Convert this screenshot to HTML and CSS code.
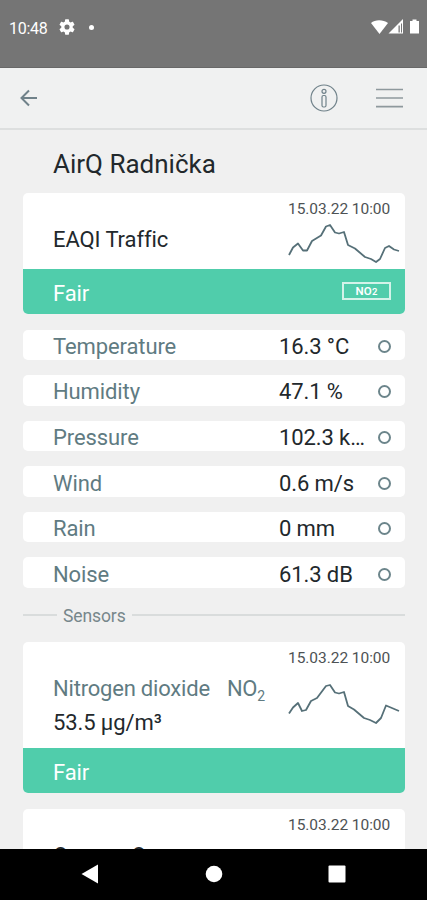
FILE: index.html
```
<!DOCTYPE html>
<html lang="en">
<head>
  <meta charset="UTF-8" />
  <meta name="viewport" content="width=device-width, initial-scale=1.0"/>
  <title>AirQ Radnička</title>
  <link rel="stylesheet" href="styles.css">
</head>
<body>
  <div class="screen">
    <div class="status-bar">
      <span class="clock">10:48</span>
      <svg class="gear" width="16" height="16" viewBox="2 2 20 20"><path fill="#fff" d="M19.14 12.94c.04-.3.06-.61.06-.94s-.02-.64-.07-.94l2.03-1.58a.5.5 0 0 0 .12-.61l-1.92-3.32a.49.49 0 0 0-.59-.22l-2.39.96a7 7 0 0 0-1.62-.94l-.36-2.54a.48.48 0 0 0-.48-.41h-3.84a.47.47 0 0 0-.47.41l-.36 2.54c-.59.24-1.13.57-1.62.94l-2.39-.96a.48.48 0 0 0-.59.22L2.74 8.87a.47.47 0 0 0 .12.61l2.03 1.58a6 6 0 0 0 0 1.88l-2.03 1.58a.5.5 0 0 0-.12.61l1.92 3.32c.12.22.37.29.59.22l2.39-.96c.5.38 1.03.7 1.62.94l.36 2.54c.05.24.24.41.48.41h3.84c.24 0 .44-.17.47-.41l.36-2.54a7 7 0 0 0 1.62-.94l2.39.96c.22.08.47 0 .59-.22l1.92-3.32a.47.47 0 0 0-.12-.61zM12 15.200a3.200 3.200 0 1 1 0-6.400 3.200 3.200 0 0 1 0 6.400z"/></svg>
      <span class="dot"></span>
      <svg class="signals" width="50" height="16" viewBox="0 0 50 16">
        <path fill="#fff" d="M0 4C4 .2 12 .2 17 4L8.500 15z"/>
        <path fill="#fff" d="M17.500 14.500 32 0v14.500z"/>
        <path fill="#757575" d="M27.500 6.500h1.300v7h-1.300zM30 4.500h1v9h-1z"/>
        <path fill="#fff" d="M39 2h2.500V.5h4V2H48v12.500h-9z"/>
      </svg>
    </div>

    <header class="toolbar">
      <svg class="back" width="18" height="18" viewBox="0 0 18 18"><path d="M17 9H1.500M9 1.500 1.500 9 9 16.500"/></svg>
      <svg class="info" width="28" height="28" viewBox="0 0 28 28">
        <circle cx="14" cy="14" r="13"/>
        <circle cx="14" cy="7.300" r="2"/>
        <rect x="12" y="11.500" width="4" height="11.500" rx="1.500"/>
      </svg>
      <svg class="menu" width="27" height="20" viewBox="0 0 27 20"><path d="M0 1.500h27M0 10h27M0 18.700h27"/></svg>
    </header>

    <main class="content">
      <h1>AirQ Radnička</h1>

      <section class="card">
        <div class="card-body overview">
          <div class="name dark">EAQI Traffic</div>
          <div class="trend">
            <time>15.03.22 10:00</time>
            <svg width="112" height="42" viewBox="0 0 112 42"><path d="M1 33 5 25.500 10 21.500 15 28.500H19L24 19 33 13.500 38 4.500 42 3 47 10.500 51 11.500 56 10 60 23 67 26.500 77 35 83 37 88 40 92 37 97 26 101 24 106 27.500 111 29"/></svg>
          </div>
        </div>
        <div class="level">Fair <span class="tag">NO<small>2</small></span></div>
      </section>

      <div class="row"><span>Temperature</span><b>16.3 °C</b><i></i></div>
      <div class="row"><span>Humidity</span><b>47.1 %</b><i></i></div>
      <div class="row"><span>Pressure</span><b>102.3 k…</b><i></i></div>
      <div class="row"><span>Wind</span><b>0.6 m/s</b><i></i></div>
      <div class="row"><span>Rain</span><b>0 mm</b><i></i></div>
      <div class="row"><span>Noise</span><b>61.3 dB</b><i></i></div>

      <div class="divider"><span>Sensors</span></div>

      <section class="card">
        <div class="card-body sensor">
          <div class="reading">
            <div class="name">Nitrogen dioxide<span class="formula">NO<sub>2</sub></span></div>
            <div class="value">53.5 µg/m³</div>
          </div>
          <div class="trend">
            <time>15.03.22 10:00</time>
            <svg width="112" height="42" viewBox="0 0 112 42"><path d="M1 31.500 5 25.500 10 21 14 29 18 28 23 19 29 16 38 4 42 3 47 10.500 51 11.500 56 10 60 24 66 27.500 76 36 82 38 88 41 93 36 98 23.500 111 29"/></svg>
          </div>
        </div>
        <div class="level">Fair</div>
      </section>

      <section class="card">
        <div class="card-body sensor">
          <div class="reading">
            <div class="name dark">Ozone<span class="formula">O<sub>3</sub></span></div>
          </div>
          <div class="trend">
            <time>15.03.22 10:00</time>
          </div>
        </div>
      </section>
    </main>

    <nav class="nav-bar">
      <svg width="18" height="20" viewBox="0 0 18 20"><path fill="#fff" d="M17 .5v19L.5 10z"/></svg>
      <svg width="18" height="18" viewBox="0 0 18 18"><circle cx="9" cy="9" r="8.300" fill="#fff"/></svg>
      <svg width="18" height="18" viewBox="0 0 18 18"><rect x=".5" y=".5" width="17" height="17" rx="1" fill="#fff"/></svg>
    </nav>
  </div>
</body>
</html>
```
FILE: styles.css
```
* {
  box-sizing: border-box;
}
body {
  margin: 0;
  font-family: Roboto, "Liberation Sans", sans-serif;
  font-size: 22px;
  letter-spacing: -0.1px;
  color: #22282c;
  background: #f0f0f0;
}
svg {
  display: block;
  flex: none;
}
.screen {
  display: flex;
  flex-direction: column;
  height: 900px;
  overflow: hidden;
}
.status-bar {
  display: flex;
  align-items: center;
  flex: none;
  height: 68px;
  padding: 0 8px 13px 9px;
  background: #757575;
  border-bottom: 1px solid #686868;
  color: #fff;
}
.clock {
  width: 50px;
  padding-top: 2px;
  font-size: 16px;
  letter-spacing: -0.3px;
}
.dot {
  width: 5px;
  height: 5px;
  margin-left: 14px;
  border-radius: 50%;
  background: #fff;
}
.signals {
  margin-left: auto;
  margin-right: -2px;
}
.toolbar {
  display: flex;
  align-items: center;
  flex: none;
  height: 62px;
  padding: 0 24px 0 20px;
  background: #f0f1f1;
  border-bottom: 2px solid #dddfdf;
}
.toolbar svg {
  fill: none;
  stroke: #70828a;
}
.toolbar .back {
  stroke-width: 2;
}
.toolbar .info {
  margin-left: auto;
  stroke-width: 1.2;
}
.toolbar .menu {
  margin-left: 38px;
  stroke: #8e999d;
  stroke-width: 1.7;
}
.content {
  flex: 1;
  min-height: 0;
  padding: 0 22px 0 23px;
  overflow: hidden;
}
h1 {
  margin: 0;
  padding: 18px 0 0 30px;
  height: 63px;
  font-size: 26px;
  line-height: 32px;
  font-weight: 400;
  letter-spacing: 0;
}
.card {
  margin-bottom: 15.500px;
  border-radius: 5px;
  overflow: hidden;
  background: #fff;
}
.card-body {
  display: flex;
  justify-content: space-between;
  padding-left: 30px;
}
.overview {
  height: 76px;
}
.overview .name {
  padding-top: 34px;
}
.sensor {
  height: 106.500px;
}
.name {
  line-height: 26px;
  color: #607b82;
  white-space: nowrap;
}
.name.dark {
  color: #22282c;
}
.reading {
  padding-top: 34px;
}
.sensor .name {
  letter-spacing: -0.2px;
}
.value {
  margin-top: 8px;
  line-height: 26px;
}
.formula {
  margin-left: 17px;
}
.formula sub {
  font-size: 14px;
  line-height: 0;
}
.trend {
  flex: none;
  width: 117px;
}
time {
  display: block;
  margin-top: 6px;
  font-size: 15.500px;
  line-height: 20px;
  letter-spacing: -0.05px;
  color: #4d5254;
}
.trend path {
  fill: none;
  stroke: #567078;
  stroke-width: 1.8;
  stroke-linejoin: round;
}
.trend svg {
  margin-top: 3px;
}
.sensor .trend svg {
  margin-top: 14px;
}
.level {
  display: flex;
  align-items: center;
  justify-content: space-between;
  height: 45px;
  padding: 3px 14px 0 30px;
  background: #50cdab;
  color: #fff;
}
.tag {
  width: 49px;
  height: 18px;
  margin-top: -4px;
  border: 2px solid #d3f3e9;
  font-size: 11.500px;
  line-height: 15px;
  letter-spacing: 0.2px;
  font-weight: 600;
  text-align: center;
}
.tag small {
  font-size: 9.500px;
}
.row {
  display: flex;
  align-items: center;
  height: 30.600px;
  margin-bottom: 15px;
  padding: 3px 14px 0 30px;
  border-radius: 5px;
  background: #fff;
}
.row span {
  width: 226px;
  color: #607b82;
}
.row b {
  font-weight: 400;
  white-space: nowrap;
}
.row i {
  width: 13px;
  height: 13px;
  margin-left: auto;
  border: 2px solid #6c858b;
  border-radius: 50%;
}
.divider {
  display: flex;
  align-items: center;
  height: 22px;
  margin: 16px 0 15.500px;
  gap: 6px;
  font-size: 17.500px;
  color: #77878b;
}
.divider span {
  padding-top: 1px;
}
.divider::before,
.divider::after {
  content: "";
  width: 34px;
  height: 2px;
  background: #d9dcdc;
}
.divider::after {
  flex: 1;
}
.nav-bar {
  display: flex;
  align-items: center;
  justify-content: space-between;
  flex: none;
  height: 51.500px;
  padding: 0 81px;
  background: #000;
}
```
